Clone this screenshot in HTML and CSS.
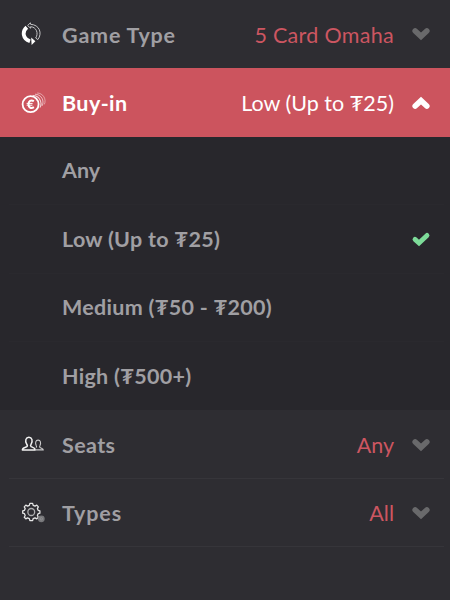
FILE: index.html
```
<!DOCTYPE html>
<html lang="en">
<head>
  <meta charset="UTF-8">
  <title>Table Filters</title>
  <link rel="stylesheet" href="styles.css">
</head>
<body>
  <div class="filters">

    <!-- Game Type -->
    <div class="row first">
      <svg class="icon" viewBox="0 0 26 26">
        <path d="M5.8 6.2C1 10.4 1.6 17.6 9 20.2" fill="none" stroke="#fff" stroke-width="3.8"/>
        <path d="M10.2 16.4L14.4 20.2L10.6 24Z" fill="#fff"/>
        <path d="M9.4 1.8L6.6 4.5L9.6 7.2V5.7C15.4 6 17.8 12.4 14.7 17L16.8 18.6C21.6 12.4 18.6 3.8 9.6 3.3Z" fill="none" stroke="#c4c4c6" stroke-width="1"/>
      </svg>
      <span class="label game-type">Game Type</span>
      <span class="value game-value">5 Card Omaha</span>
      <svg class="arrow" viewBox="0 0 18 14"><path d="M3.2 4L9 9.4L14.8 4"/></svg>
    </div>

    <!-- Buy-in (open) -->
    <div class="row active">
      <svg class="icon" viewBox="0 0 26 26">
        <g fill="none" stroke="#fff">
          <circle cx="9.6" cy="14.2" r="8" stroke-width="1.8"/>
          <path d="M11.6 5.5A8.1 8.1 0 0 1 18.9 17.6" stroke-width="1.1" opacity=".75"/>
          <path d="M14 4.2A8 8 0 0 1 21.1 15.9" stroke-width="1" opacity=".6"/>
          <path d="M16.2 3A8 8 0 0 1 23.3 14.4" stroke-width=".9" opacity=".5"/>
          <path d="M12.9 11.2C9.8 9.3 7.5 11.2 7.5 14.2S9.8 19.2 12.9 17.2" stroke-width="2"/>
          <path d="M5.6 13.4H11.6M5.6 15.2H11.4" stroke-width="1"/>
        </g>
      </svg>
      <span class="label buy-in">Buy-in</span>
      <span class="value buy-value">Low (Up to ₮25)</span>
      <svg class="arrow" viewBox="0 0 18 14"><path d="M3.2 10L9 4.6L14.8 10"/></svg>
    </div>

    <div class="options">
      <div class="option"><span class="label opt-any">Any</span></div>
      <div class="option">
        <span class="label opt-low">Low (Up to ₮25)</span>
        <svg class="check" viewBox="0 0 18 14"><path d="M3 7.4L7 11L15 3.4"/></svg>
      </div>
      <div class="option"><span class="label opt-medium">Medium (₮50 - ₮200)</span></div>
      <div class="option"><span class="label opt-high">High (₮500+)</span></div>
    </div>

    <!-- Seats -->
    <div class="row">
      <svg class="icon" viewBox="0 0 26 26">
        <g fill="none" stroke="#f2f2f2" stroke-linejoin="round">
          <path d="M14.2 17.9H1.4C1.4 15.4 4 15.8 5.8 14.7C6.6 14 6.4 13 5.6 12C3.8 8.7 4.8 5.2 7.9 5.2S12 8.7 10.2 12C9.4 13 9.4 14 10.1 14.7C11.8 15.7 14.2 15.4 14.2 17.9Z" stroke-width="1.5"/>
          <path d="M14.8 17.9H22.3C22.3 16.2 20.2 16.4 19 15.5C18.4 14.9 18.5 14.3 19 13.5C20.2 10.8 19.6 8.1 17.1 8.1S14 10.8 15.2 13.5C15.8 14.4 15.8 15 15 15.6" stroke-width="1.1" opacity=".8"/>
        </g>
      </svg>
      <span class="label seats">Seats</span>
      <span class="value seats-value">Any</span>
      <svg class="arrow" viewBox="0 0 18 14"><path d="M3.2 4L9 9.4L14.8 4"/></svg>
    </div>

    <!-- Types -->
    <div class="row">
      <svg class="icon" viewBox="0 0 26 26">
        <g fill="none" stroke="#e6e6e6" stroke-linejoin="round" transform="translate(.5 .6) scale(.92 .95)">
          <path d="M9.1 2.9H10.6L12.1 2.9L12.7 5L14.7 5.8L16.6 4.8L18.3 6.6L17.3 8.5L18.1 10.2L20 10.8V13.2L18.1 13.8L17.3 15.7L18.3 17.5L16.6 19.2L14.7 18.2L12.7 19L12.1 21H9.1L8.5 19L6.6 18.2L4.7 19.2L3 17.5L4 15.7L3.2 13.8L1.3 13.2V10.8L3.2 10.2L4 8.5L3 6.6L4.7 4.8L6.6 5.8L8.5 5Z" stroke-width="1.4"/>
          <circle cx="10.6" cy="12" r="3.7" stroke-width="1.4" opacity=".7"/>
        </g>
        <circle cx="20.3" cy="18.8" r="3.4" fill="#77777a"/>
        <circle cx="20.3" cy="18.8" r="1.2" fill="none" stroke="#99999b" stroke-width=".7"/>
      </svg>
      <span class="label types">Types</span>
      <span class="value types-value">All</span>
      <svg class="arrow" viewBox="0 0 18 14"><path d="M3.2 4L9 9.4L14.8 4"/></svg>
    </div>

  </div>
</body>
</html>
```
FILE: styles.css
```
body {
  margin: 0;
  background: #2e2d32;
  font-family: Lato, "Noto Sans", sans-serif;
  font-size: 21.5px;
}

.filters {
  height: 600px;
  overflow: hidden;
}

/* ========== ROWS ========== */
.row,
.option {
  display: flex;
  align-items: center;
  box-sizing: border-box;
  height: 68.4px;
  padding: 0 20px 0 21px;
  position: relative;
}

/* inset divider under each row */
.row::after,
.option::after {
  content: "";
  position: absolute;
  left: 9px;
  right: 6px;
  bottom: 0;
  height: 1px;
  background: #36353a;
}

.row.active {
  background: #cc545e;
}

.row.active::after,
.row.first::after,
.option:last-child::after {
  display: none;
}

.options {
  background: #28272c;
}

.option {
  padding-left: 62px;
  padding-bottom: 1px;
}

.option::after {
  background: #2a292e;
}

.label {
  color: #a09fa3;
  font-weight: 700;
  white-space: nowrap;
}

.value {
  margin-left: auto;
  color: #cc5661;
  white-space: nowrap;
}

.first .label,
.first .value {
  padding-top: 2px;
}

.active .label,
.active .value {
  color: #fff;
}

/* tracking */
.game-type { letter-spacing: .8px; }
.game-value { letter-spacing: .3px; }
.buy-in { letter-spacing: .4px; }
.opt-low,
.opt-medium,
.opt-high { letter-spacing: .28px; }
.seats { letter-spacing: .4px; }
.types { letter-spacing: .9px; }

/* ========== ICONS ========== */
.icon {
  width: 26px;
  height: 26px;
  margin-right: 15px;
}

.arrow,
.check {
  width: 18px;
  height: 14px;
  margin-left: 18px;
  overflow: visible;
  fill: none;
  stroke: #69696b;
  stroke-width: 5.6;
  stroke-linecap: round;
}

.active .arrow {
  stroke: #fff;
}

.check {
  margin-left: auto;
  stroke: #7ddb99;
  stroke-width: 4.8;
}
```
